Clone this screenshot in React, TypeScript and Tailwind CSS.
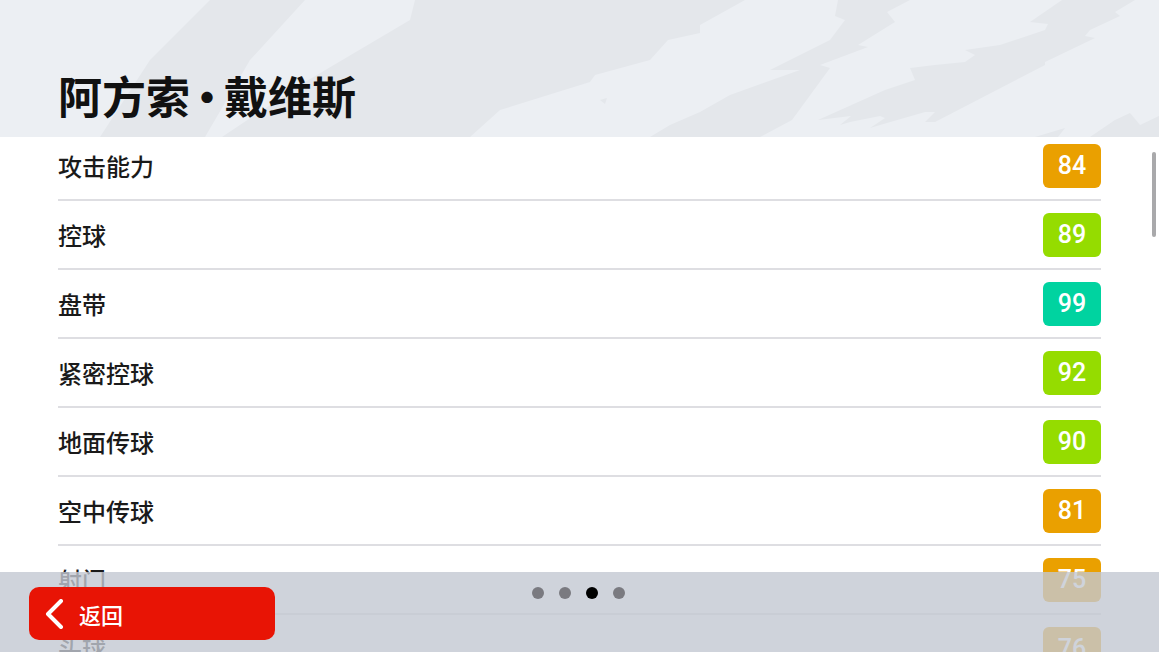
const stats = [
  { name: "攻击能力", value: 84, color: "bg-[#eaa000]" },
  { name: "控球", value: 89, color: "bg-[#95dc00]" },
  { name: "盘带", value: 99, color: "bg-[#00d3a0]" },
  { name: "紧密控球", value: 92, color: "bg-[#95dc00]" },
  { name: "地面传球", value: 90, color: "bg-[#95dc00]" },
  { name: "空中传球", value: 81, color: "bg-[#eaa000]" },
  { name: "射门", value: 75, color: "bg-[#eaa000]" },
  { name: "头球", value: 76, color: "bg-[#eaa000]" },
];

function HeaderStrokes() {
  return (
    <svg className="absolute inset-0" width="1159" height="137" viewBox="0 0 1159 137">
      <g fill="#e4e7eb">
        <path d="M210 0 L305 0 L250 60 L205 137 L100 137 L150 60 Z" />
        <path d="M415 0 L745 0 L700 25 L700 33 L668 40 L650 60 L595 75 L590 82 L500 110 L470 137 L222 137 L300 85 L410 20 Z" />
        <path d="M838 0 L910 0 L887 12 L895 22 L858 45 L868 47 L820 65 L830 68 L792 120 L760 137 L650 137 L670 125 L700 112 L730 95 L800 70 L770 70 L830 40 L845 20 L835 16 Z" />
        <path d="M1062 0 L1135 0 L1115 12 L1120 16 L1090 30 L1085 36 L1095 38 L1045 62 L1045 65 L935 122 L925 122 L935 112 L925 112 L880 125 L870 128 L885 118 L880 116 L850 122 L840 125 L851 116 L818 120 L885 90 L915 80 L910 68 L935 65 L965 62 L975 55 L965 50 L1000 45 L1045 30 L1048 24 L1030 22 Z" />
        <path d="M1090 137 L1115 120 L1130 113 L1140 125 L1159 116 L1159 137 Z" />
        <path d="M1035 137 L1065 128 L1058 137 Z" />
        <path d="M600 100 L607 98 L605 104 Z" />
      </g>
    </svg>
  );
}

export default function App() {
  return (
    <div
      className="relative flex h-[652px] w-[1159px] flex-col overflow-hidden bg-white"
      style={{ fontFamily: '"Noto Sans CJK SC", "Noto Sans", sans-serif' }}
    >
      <div className="relative h-[137px] shrink-0 bg-[#eceff3]">
        <HeaderStrokes />
        <h1 className="relative pl-[58px] pt-[73px] text-[44px] font-bold leading-none text-[#111]">
          阿方索<span className="-mx-[5px]">·</span>戴维斯
        </h1>
      </div>

      <div className="flex-1 overflow-hidden">
        <div className="-mt-[5px] mx-[58px]">
          {stats.map((s) => (
            <div
              key={s.name}
              className="flex h-[69px] items-center justify-between border-b-2 border-[#dedee2]"
            >
              <span className="text-[24px] font-medium text-[#1a1a1a]">{s.name}</span>
              <span
                className={`flex h-[44px] w-[58px] items-center justify-center rounded-[6px] ${s.color} text-[25px] font-medium text-white`}
                style={{ fontFamily: 'Roboto, sans-serif' }}
              >
                {s.value}
              </span>
            </div>
          ))}
        </div>
      </div>

      <div className="absolute right-[3px] top-[152px] h-[85px] w-[4px] rounded-full bg-[#a9a9ab]" />

      <div className="absolute bottom-0 left-0 right-0 h-[80px] bg-[#c3c8d2]/80">
        <div className="flex h-full items-start">
          <button className="ml-[29px] mt-[15px] flex h-[53px] w-[246px] items-center gap-[14px] rounded-[10px] bg-[#e81405] pl-[16px] text-white">
            <svg width="20" height="30" viewBox="0 0 20 30" fill="none">
              <path d="M16 2 L3 15 L16 28" stroke="white" strokeWidth="4" strokeLinecap="round" strokeLinejoin="round" />
            </svg>
            <span className="text-[22px] font-medium leading-none">返回</span>
          </button>
          <div className="ml-[257px] mt-[15px] flex gap-[15px]">
            <span className="h-[12px] w-[12px] rounded-full bg-[#7a7a80]" />
            <span className="h-[12px] w-[12px] rounded-full bg-[#7a7a80]" />
            <span className="h-[12px] w-[12px] rounded-full bg-black" />
            <span className="h-[12px] w-[12px] rounded-full bg-[#7a7a80]" />
          </div>
        </div>
      </div>
    </div>
  );
}
